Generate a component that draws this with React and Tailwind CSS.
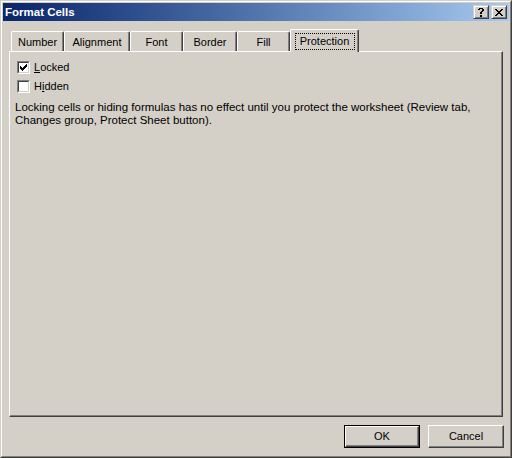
import React from "react";

// pixel glyphs for the caption buttons and the check mark
const HELP = [".XXXX.", "XX..XX", "....XX", "...XX.", "..XX..", "..XX..", "......", "..XX..", "..XX.."];
const CLOSE = ["XX....XX", ".XX..XX.", "..XXXX..", "...XX...", "..XXXX..", ".XX..XX.", "XX....XX"];
const CHECK = ["......X", ".....XX", "X...XXX", "XX.XXX.", "XXXXX..", ".XXX...", "..X...."];

const Pixels = ({ rows }) => (
  <svg width={rows[0].length} height={rows.length} shapeRendering="crispEdges">
    {rows.flatMap((r, y) =>
      [...r].map((c, x) =>
        c === "X" ? <rect key={`${x}-${y}`} x={x} y={y} width="1" height="1" fill="#000" /> : null
      )
    )}
  </svg>
);

const CaptionButton = ({ rows }) => (
  <div className="flex h-[14px] w-[16px] items-center justify-center border-t border-l border-t-[#d4d0c8] border-l-[#d4d0c8] border-r border-b border-r-[#404040] border-b-[#404040] bg-[#d4d0c8] shadow-[inset_1px_1px_#fff,inset_-1px_-1px_#808080]">
    <Pixels rows={rows} />
  </div>
);

const Tab = ({ label, w }) => (
  <div
    className={`${w} flex h-[20px] justify-center rounded-t-[2px] border-t border-l border-r border-t-white border-l-white border-r-[#404040] pt-[2px] shadow-[inset_-1px_0_#808080] items-center`}
  >
    {label}
  </div>
);

const Checkbox = ({ checked, children }) => (
  <div className="flex h-[13px] items-center">
    <div className="h-[13px] w-[13px] border border-t-[#808080] border-l-[#808080] border-r-white border-b-white">
      <div className="flex h-[11px] w-[11px] items-center justify-center border border-t-[#404040] border-l-[#404040] border-r-[#d4d0c8] border-b-[#d4d0c8] bg-white">
        {checked && <Pixels rows={CHECK} />}
      </div>
    </div>
    <span className="ml-[4px]">{children}</span>
  </div>
);

const PushButton = ({ children, isDefault }) => {
  const face = (
    <div className="flex h-full w-full items-center justify-center border border-t-white border-l-white border-r-[#404040] border-b-[#404040] shadow-[inset_-1px_-1px_#808080]">
      {children}
    </div>
  );
  return isDefault ? (
    <div className="h-[23px] w-[76px] border border-black">{face}</div>
  ) : (
    <div className="h-[23px] w-[76px]">{face}</div>
  );
};

export default function App() {
  return (
    <div className="h-[458px] w-[512px] overflow-hidden border border-t-[#d4d0c8] border-l-[#d4d0c8] border-r-[#404040] border-b-[#404040] bg-[#d4d0c8] font-['Liberation_Sans',Arial,sans-serif] text-[11px] leading-[13px] text-black">
      <div className="flex h-full flex-col border border-t-white border-l-white border-r-[#808080] border-b-[#808080] p-[1px]">
        {/* Title bar */}
        <div className="flex h-[18px] shrink-0 items-center bg-linear-to-r from-[#0a246a] to-[#a6caf0] pl-[2px] pr-[2px]">
          <span className="flex-1 text-[11.5px] font-bold text-white">Format Cells</span>
          <CaptionButton rows={HELP} />
          <div className="w-[2px]" />
          <CaptionButton rows={CLOSE} />
        </div>

        {/* Tabs */}
        <div className="mt-[8px] flex h-[22px] items-end pl-[8px]">
          <Tab label="Number" w="w-[53px]" />
          <Tab label="Alignment" w="w-[66px]" />
          <Tab label="Font" w="w-[53px]" />
          <Tab label="Border" w="w-[54px]" />
          <Tab label="Fill" w="w-[53px]" />
          <div className="relative z-10 -mb-[1px] flex h-[23px] w-[69px] items-start justify-center rounded-t-[2px] border-t border-l border-r border-t-white border-l-white border-r-[#404040] bg-[#d4d0c8] pt-[3px] shadow-[inset_-1px_0_#808080]">
            <span className="flex h-[17px] w-[60px] items-center justify-center border border-dotted border-black">
              Protection
            </span>
          </div>
        </div>

        {/* Tab page */}
        <div className="mx-[6px] h-[366px] border border-t-white border-l-white border-r-[#404040] border-b-[#404040] pl-[7px] pt-[9px] shadow-[inset_-1px_-1px_#808080]">
          <div className="flex flex-col gap-[6px]">
            <Checkbox checked>
              <u>L</u>ocked
            </Checkbox>
            <Checkbox>
              H<u>i</u>dden
            </Checkbox>
          </div>
          <p className="-ml-[2px] mt-[8px] text-[11.5px]">
            Locking cells or hiding formulas has no effect until you protect the worksheet (Review tab,
            <br />
            Changes group, Protect Sheet button).
          </p>
        </div>

        {/* Buttons */}
        <div className="mt-[8px] flex justify-end gap-[8px] pr-[5px]">
          <PushButton isDefault>OK</PushButton>
          <PushButton>Cancel</PushButton>
        </div>
      </div>
    </div>
  );
}
